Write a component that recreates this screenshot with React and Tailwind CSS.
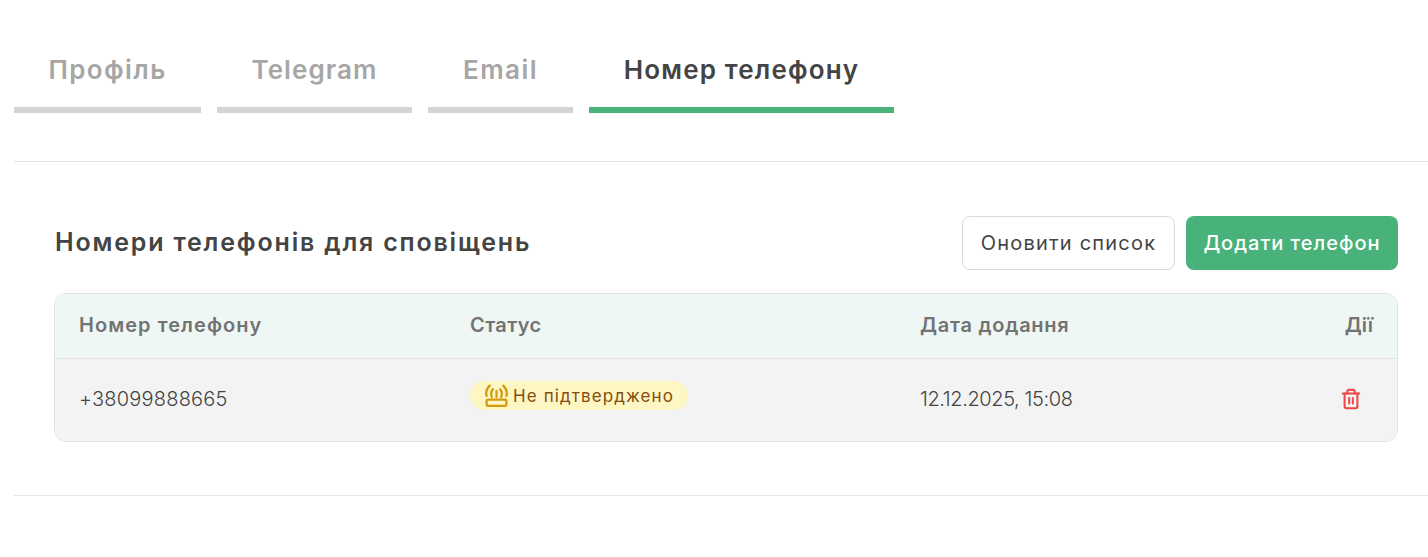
const font = { fontFamily: '"Inter", "Noto Sans", sans-serif' };

function Tab({ label, w, active, spacing }) {
  return (
    <div
      className={`h-[69px] pb-[13px] flex items-center justify-center border-b-[6px] text-[26px] font-semibold ${spacing} ${active ? "border-[#48b27a] text-[#444444]" : "border-[#d4d4d4] text-[#a6a6a6]"}`}
      style={{ width: w }}
    >
      <span>{label}</span>
    </div>
  );
}

function Pending() {
  return (
    <svg width="25" height="25" viewBox="0 0 24 24" fill="none" stroke="#d19a0e" strokeWidth="2.100" strokeLinecap="round" strokeLinejoin="round">
      <rect x="2.500" y="16" width="19" height="6" rx="1.500" />
      <path d="M2.500 12.500c-1-3.500 0-7 3-10" />
      <path d="M21.500 12.500c1-3.500 0-7-3-10" />
      <path d="M7.500 13.500c-1.200-2.500-.8-5 1-7.500" />
      <path d="M16.500 13.500c1.200-2.500.8-5-1-7.500" />
      <path d="M12 7.500v6" />
    </svg>
  );
}

export default function App() {
  return (
    <div className="w-[1428px] h-[557px] bg-white overflow-hidden pl-[14px] pt-[44px]" style={font}>
      <div className="flex gap-4">
        <Tab label="Профіль" w={187} spacing="tracking-[1.4px]" />
        <Tab label="Telegram" w={195} spacing="tracking-[1.1px]" />
        <Tab label="Email" w={145} spacing="tracking-[1.5px]" />
        <Tab label="Номер телефону" w={305} spacing="tracking-[1.15px]" active />
      </div>
      <div className="mt-[48px] border-t border-b border-[#e5e5e5] h-[335px] pl-[40px] pr-[30px] pt-[54px]">
        <div className="flex items-center justify-between h-[54px]">
          <h2 className="ml-px text-[25px] font-semibold text-[#444444] tracking-[1.8px]">Номери телефонів для сповіщень</h2>
          <div className="flex gap-[11px]">
            <button className="h-[54px] w-[213px] pb-px rounded-lg border border-[#d9d9d9] bg-white text-[20px] font-normal text-[#444444] tracking-[1.2px]">Оновити список</button>
            <button className="h-[54px] w-[212px] pb-px rounded-lg bg-[#48b27a] text-[20px] font-medium text-white tracking-[1px]">Додати телефон</button>
          </div>
        </div>
        <div className="mt-[23px] rounded-xl border border-[#e2e2e2] overflow-hidden">
          <div className="flex items-center h-[65px] pb-[2px] bg-[#eff7f4] border-b border-[#e2e2e2] px-6 text-[20px] font-semibold text-[#737373]">
            <div className="w-[391px] tracking-[1.05px]">Номер телефону</div>
            <div className="w-[450px] tracking-[0.4px]">Статус</div>
            <div className="flex-1 tracking-[0.75px]">Дата додання</div>
            <div>Дії</div>
          </div>
          <div className="flex items-center h-[82px] pb-[2px] bg-[#f3f3f3] px-6 text-[20px] font-light text-[#444444]">
            <div className="w-[391px] tracking-[0.2px]">+38099888665</div>
            <div className="w-[450px]">
              <span className="inline-flex items-center gap-[4px] h-[29px] -mt-[3px] rounded-full bg-[#fef6c3] pl-[14px] pr-[14px] text-[17px] font-normal text-[#854d0e] tracking-[1.1px] align-top">
                <Pending />
                <span className="mt-[2px]">Не підтверджено</span>
              </span>
            </div>
            <div className="flex-1 tracking-[-0.4px]">12.12.2025, 15:08</div>
            <div className="w-[33px] flex justify-start">
              <svg width="22" height="22" viewBox="0 0 24 24" fill="none" stroke="#ef4444" strokeWidth="2.200" strokeLinecap="round" strokeLinejoin="round">
                <path d="M3 6h18" />
                <path d="M19 6v14a2 2 0 0 1-2 2H7a2 2 0 0 1-2-2V6" />
                <path d="M8 6V4a2 2 0 0 1 2-2h4a2 2 0 0 1 2 2v2" />
                <path d="M10 11v6" />
                <path d="M14 11v6" />
              </svg>
            </div>
          </div>
        </div>
      </div>
    </div>
  );
}
